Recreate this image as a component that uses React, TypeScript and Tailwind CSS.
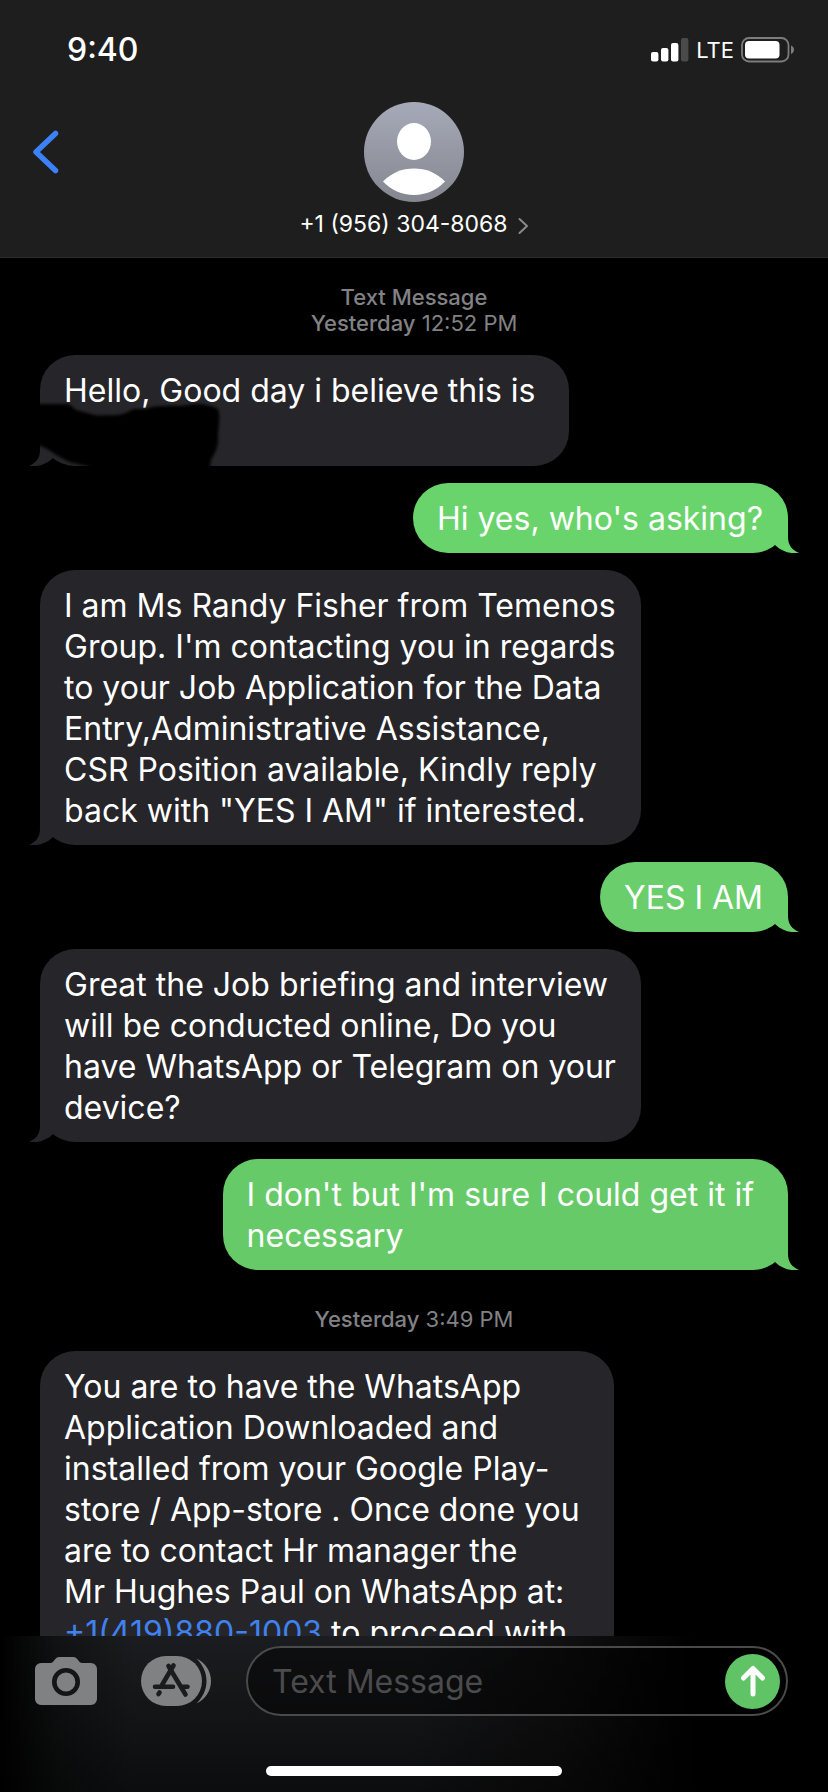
import clsx from 'clsx';
import { Fragment, type ReactNode } from 'react';

type Side = 'in' | 'out';

interface Message {
  id: number;
  side: Side;
  body: ReactNode;
  tone?: string;
  redacted?: boolean;
}

interface Thread {
  id: string;
  service?: string;
  day: string;
  time: string;
  messages: Message[];
}

const THREADS: Thread[] = [
  {
    id: 'first',
    service: 'Text Message',
    day: 'Yesterday',
    time: '12:52 PM',
    messages: [
      { id: 1, side: 'in', body: 'Hello, Good day i believe this is\u00a0\n\u00a0', redacted: true },
      { id: 2, side: 'out', body: "Hi yes, who's asking?", tone: 'bg-[#69d46b] text-[#69d46b]' },
      {
        id: 3,
        side: 'in',
        body: 'I am Ms Randy Fisher from Temenos\nGroup. I\'m contacting you in regards\nto your Job Application for the Data\nEntry,Administrative Assistance,\nCSR Position available, Kindly reply\nback with "YES I AM" if interested.',
      },
      { id: 4, side: 'out', body: 'YES I AM', tone: 'bg-[#69ce6b] text-[#69ce6b]' },
      {
        id: 5,
        side: 'in',
        body: 'Great the Job briefing and interview\nwill be conducted online, Do you\nhave WhatsApp or Telegram on your\ndevice?',
      },
      {
        id: 6,
        side: 'out',
        body: "I don't but I'm sure I could get it if\u00a0\nnecessary",
        tone: 'bg-[#67ca69] text-[#67ca69]',
      },
    ],
  },
  {
    id: 'second',
    day: 'Yesterday',
    time: '3:49 PM',
    messages: [
      {
        id: 7,
        side: 'in',
        body: (
          <>
            {'You are to have the WhatsApp\nApplication Downloaded and\ninstalled from your Google Play-\nstore / App-store . Once done you\u00a0\nare to contact Hr manager the\nMr Hughes Paul on WhatsApp at:\n'}
            <a href="tel:+14198801003" className="text-[#3f82ee]">
              +1(419)880-1003
            </a>
            {' to proceed with'}
          </>
        ),
      },
    ],
  },
];

function StatusBar() {
  return (
    <div className="flex h-[100px] items-center justify-between pr-[33px] pl-[67px]">
      <span className="text-[32px] leading-10 font-medium">9:40</span>
      <div className="flex items-center gap-[7px]">
        <svg width="38" height="24" viewBox="0 0 38 24" fill="currentColor" aria-hidden>
          <rect x="0" y="14" width="7.4" height="9.5" rx="2" />
          <rect x="10" y="10" width="7.4" height="13.5" rx="2" />
          <rect x="20" y="5" width="7.4" height="18.5" rx="2" />
          <rect x="30" y="0" width="7.4" height="23.5" rx="2" className="text-[#4a4a4a]" />
        </svg>
        <span className="text-[22px] leading-7">LTE</span>
        <svg width="54" height="26" viewBox="0 0 54 26" aria-hidden>
          <rect x="1" y="1" width="46.5" height="23.5" rx="7" fill="none" stroke="#7c7c7c" strokeWidth="1.8" />
          <rect x="4" y="4" width="34.5" height="17.5" rx="4" fill="#fff" />
          <path d="M50 8.500c2 .7 3 2.300 3 4.200s-1 3.500-3 4.200z" fill="#7c7c7c" />
        </svg>
      </div>
    </div>
  );
}

function Avatar() {
  return (
    <svg width="100" height="100" viewBox="0 0 100 100" aria-hidden>
      <defs>
        <linearGradient id="avatar-bg" x1="0" y1="0" x2="0" y2="1">
          <stop offset="0" stopColor="#a6aab8" />
          <stop offset="1" stopColor="#858790" />
        </linearGradient>
      </defs>
      <circle cx="50" cy="50" r="50" fill="url(#avatar-bg)" />
      <ellipse cx="50" cy="39.500" rx="17" ry="18.500" fill="#fff" />
      <path d="M19 79.500C27 71 38 66.500 50 66.500S73 71 81 79.500C73 88 62 93 50 93S27 88 19 79.500z" fill="#fff" />
    </svg>
  );
}

function Header() {
  return (
    <header className="shrink-0 border-b border-[#2b2b2b] bg-[#1e1e1e] text-white">
      <StatusBar />
      <div className="grid grid-cols-[1fr_auto_1fr] pt-0.5 pb-[19px]">
        <button type="button" aria-label="Back" className="ml-8 flex h-[100px] w-8 items-center">
          <svg width="28" height="44" viewBox="0 0 28 44" fill="none" aria-hidden>
            <path d="M23.500 3.500 4 22l19.500 18.500" stroke="#3b82f6" strokeWidth="5.500" strokeLinecap="round" strokeLinejoin="round" />
          </svg>
        </button>
        <button type="button" className="flex flex-col items-center gap-2">
          <Avatar />
          <span className="flex items-center gap-2.5 text-[23px] leading-7">
            +1 (956) 304-8068
            <svg width="11" height="18" viewBox="0 0 11 18" fill="none" className="mt-1" aria-hidden>
              <path d="M1.500 2 9 9l-7.500 7" stroke="#8a8a8c" strokeWidth="2" strokeLinecap="round" strokeLinejoin="round" />
            </svg>
          </span>
        </button>
      </div>
    </header>
  );
}

function Redaction() {
  return (
    <svg width="184" height="114" viewBox="0 0 184 114" className="absolute top-0 left-0" aria-hidden>
      <defs>
        <filter id="marker-edge" x="-5%" y="-5%" width="110%" height="110%">
          <feGaussianBlur stdDeviation="1.5" />
        </filter>
      </defs>
      <path
        d="M-6 49H27C33 50 33 55 40 56C48 58 54 61 62 60.500C72 60 80 61 88 57C92 53 98 54 106 54C114 50 130 51 144 50.500C156 48 168 48 178 54C181 62 178 72 178 82C179 92 174 100 171 105L169 118H60C48 108 34 111 24 104C14 100 8 92-6 89z"
        fill="#000"
        filter="url(#marker-edge)"
      />
    </svg>
  );
}

function Tail({ side }: { side: Side }) {
  return (
    <svg
      width="28"
      height="36"
      viewBox="0 0 28 36"
      fill="currentColor"
      className={clsx('absolute bottom-0', side === 'in' ? '-left-[11px]' : '-right-[11px] -scale-x-100')}
      aria-hidden
    >
      <path d="M0 36C7 33 11 28 11 20V0L27 22 23.500 28.500C17 34.500 9 37 0 36z" />
    </svg>
  );
}

function Bubble({ message }: { message: Message }) {
  const { side, body, tone, redacted } = message;
  return (
    <li
      className={clsx(
        'relative w-fit rounded-[35px] pt-[15px] pr-[25px] pb-[14px] pl-6',
        side === 'in' ? 'self-start bg-[#262529] text-[#262529]' : 'self-end',
        tone,
      )}
    >
      <Tail side={side} />
      <p className="relative text-[32px] leading-[41px] whitespace-pre-line text-white">{body}</p>
      {redacted && <Redaction />}
    </li>
  );
}

function Composer() {
  return (
    <footer className="shrink-0 bg-[linear-gradient(to_bottom,transparent,rgb(0_0_0/0.55)),linear-gradient(to_right,#000,#111213_7%,#1b1c1f_16%,#1b1c1f_50%,#101011_68%,#000_84%)] text-[#808183]">
      <form className="flex items-center pt-2.5 pr-10 pl-[35px]" onSubmit={(e) => e.preventDefault()}>
        <button type="button" aria-label="Camera">
          <svg width="62" height="48" viewBox="0 0 62 48" aria-hidden>
            <path
              d="M6 6H15C17.500 6 18 5 19.500 3C21 1 22 0 24.500 0H38C40.500 0 41.500 1 43 3C44.500 5 45 6 47.500 6H56A6 6 0 0 1 62 12V42A6 6 0 0 1 56 48H6A6 6 0 0 1 0 42V12A6 6 0 0 1 6 6z"
              fill="currentColor"
            />
            <circle cx="31" cy="25" r="11.700" fill="none" stroke="#141517" strokeWidth="4.600" />
          </svg>
        </button>
        <button type="button" aria-label="Apps" className="ml-11">
          <svg width="70" height="50" viewBox="0 0 70 50" aria-hidden>
            <rect width="61" height="50" rx="25" fill="currentColor" />
            <path d="M55.500 2.500C64.500 7 70 15 70 25S64.500 43 55.500 47.500C61.500 41.500 65.500 34 65.500 25S61.500 8.500 55.500 2.500z" fill="currentColor" />
            <g fill="none" stroke="#1b1c1e" strokeWidth="4.600" strokeLinecap="round">
              <path d="M27.500 10 32.500 18.500M32.500 9.500 21 29M14 30.700H32M41 30.700H46.500M32.500 18.500 44.500 38.500M18.500 36.500 17.500 38" />
            </g>
          </svg>
        </button>
        <div className="ml-[35px] flex h-[70px] min-w-0 flex-1 items-center rounded-full border-2 border-[#4a4a4b] bg-black/45 pr-1.5 pl-6">
          <input
            type="text"
            aria-label="Text Message"
            placeholder="Text Message"
            className="min-w-0 flex-1 bg-transparent text-[32px] leading-[41px] text-white outline-none placeholder:text-[#4b4b4d]"
          />
          <button type="submit" aria-label="Send" className="flex size-[55px] items-center justify-center rounded-full bg-[#60c466]">
            <svg width="26" height="32" viewBox="0 0 26 32" fill="none" stroke="#fff" strokeWidth="5" strokeLinecap="round" strokeLinejoin="round" aria-hidden>
              <path d="M13 29V4M3.500 13 13 3.500 22.500 13" />
            </svg>
          </button>
        </div>
      </form>
      <div className="mx-auto mt-[50px] mb-4 h-2.5 w-[296px] rounded-full bg-white" />
    </footer>
  );
}

export default function App() {
  return (
    <div className="flex h-screen flex-col overflow-hidden bg-black font-['Inter',sans-serif]">
      <Header />
      <main className="min-h-0 flex-1 overflow-hidden px-10 pt-[26px]">
        {THREADS.map((thread, i) => (
          <Fragment key={thread.id}>
            <div className={clsx('mb-[19px] text-center text-[22px] leading-[26px] text-[#828284]', i > 0 && 'mt-9')}>
              {thread.service && <p className="font-medium">{thread.service}</p>}
              <p>
                <span className="font-medium">{thread.day}</span> {thread.time}
              </p>
            </div>
            <ul className="flex flex-col gap-[17px]">
              {thread.messages.map((m) => (
                <Bubble key={m.id} message={m} />
              ))}
            </ul>
          </Fragment>
        ))}
      </main>
      <Composer />
    </div>
  );
}
